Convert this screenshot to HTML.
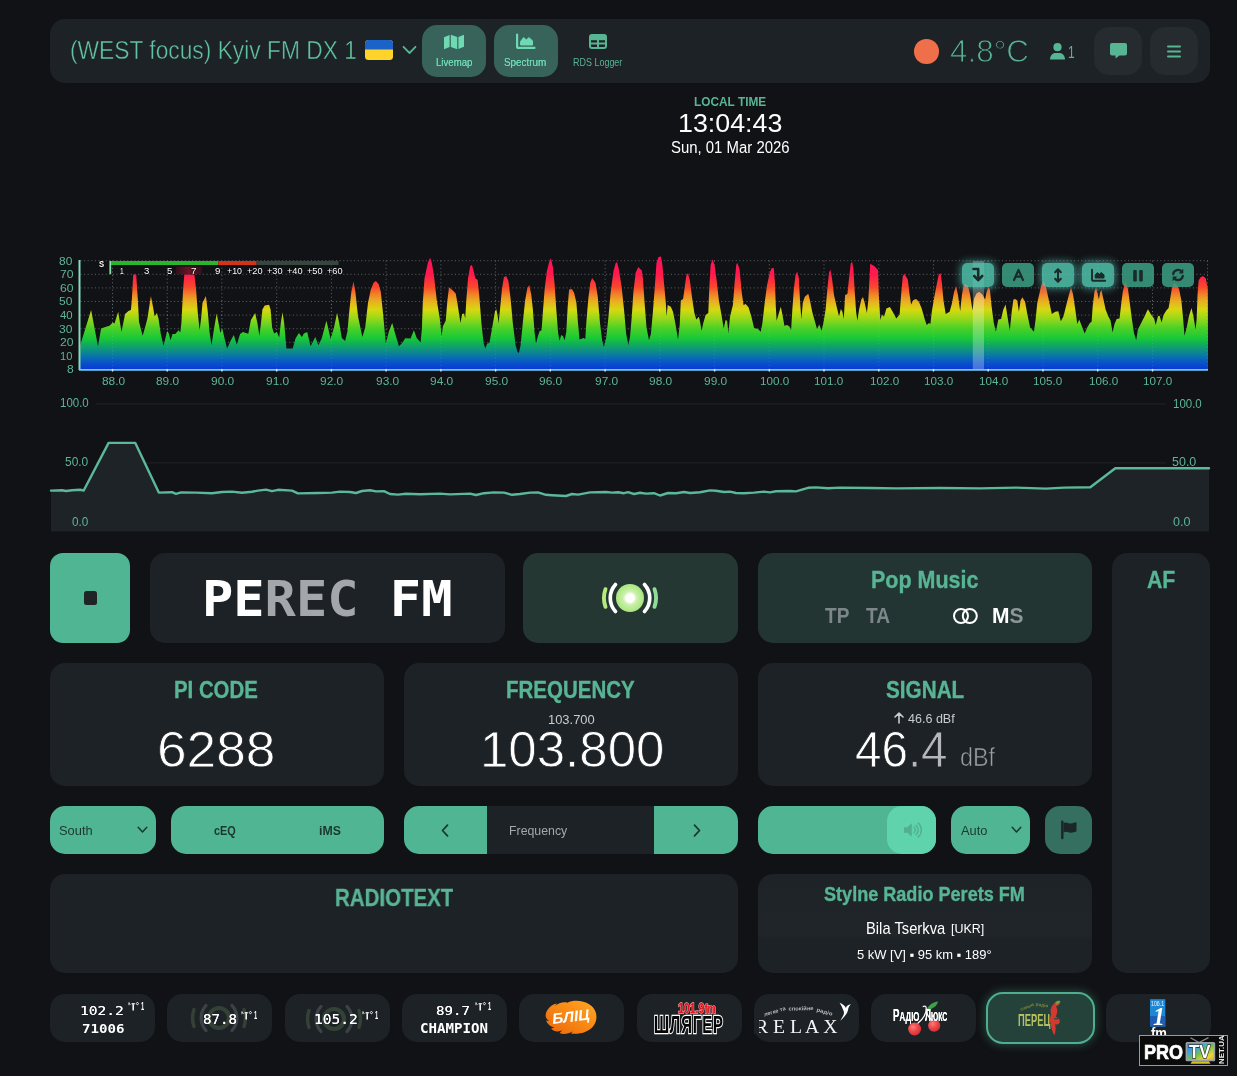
<!DOCTYPE html>
<html lang="en"><head><meta charset="utf-8"><title>FM-DX Webserver</title>
<style>
html,body{margin:0;padding:0;background:#111215;}
body{width:1237px;height:1076px;position:relative;overflow:hidden;font-family:"Liberation Sans",sans-serif;color:#fff;}
.b{position:absolute;box-sizing:border-box;}
.t{position:absolute;white-space:nowrap;line-height:1;transform-origin:0 0;display:block;}
svg{position:absolute;overflow:visible;}
#wrapper{position:absolute;left:0;top:0;width:1237px;height:1076px;will-change:transform;}

</style></head>
<body>
<div id="wrapper">
<div id="navigation">
<div class="b " style="left:50px;top:19px;width:1160px;height:64px;background:#1d2226;border-radius:15px;"></div>
<span class="t" style="left:69.96px;top:38.08px;font-size:25.32px;font-family:'Liberation Sans', sans-serif;font-weight:400;color:#62c3a0;transform:scaleX(0.8999);-webkit-text-stroke:0.45px #1d2226;">(WEST focus) Kyiv FM DX 1</span>
<svg style="left:365px;top:39.5px" width="28" height="20" viewBox="0 0 28 20"><rect width="28" height="20" rx="3.5" fill="#ffd42a"/><path d="M0 9.5V3.5A3.5 3.5 0 0 1 3.5 0h21A3.5 3.5 0 0 1 28 3.5v6z" fill="#1c63c9"/></svg>
<svg style="left:402px;top:45px" width="15" height="10" viewBox="0 0 15 10"><path d="M1.5 1.8 7.5 8 13.5 1.8" fill="none" stroke="#58b594" stroke-width="1.8" stroke-linecap="round" stroke-linejoin="round"/></svg>
<div class="b " style="left:422px;top:25px;width:64px;height:52px;background:#37635a;border-radius:15px;"></div>
<div class="b " style="left:494px;top:25px;width:64px;height:52px;background:#37635a;border-radius:15px;"></div>
<svg style="left:444px;top:34px" width="20" height="16" viewBox="0 0 20 16"><path d="M0 3.2 5.6 1v12L0 15.2zM6.8 0.8 13.2 3v12.2L6.8 13zM14.4 3 20 0.8v12L14.4 15z" fill="#6fd9b4"/></svg>
<span class="t" style="left:435.52px;top:56.73px;font-size:10.95px;font-family:'Liberation Sans', sans-serif;font-weight:400;color:#6fd9b4;transform:scaleX(0.8823);text-shadow:0 0 0.4px #6fd9b4;">Livemap</span>
<svg style="left:516px;top:34px" width="19" height="15" viewBox="0 0 19 15"><path d="M1.1 0.5v12.4a1 1 0 0 0 1 1H18.5" fill="none" stroke="#6fd9b4" stroke-width="2.2" stroke-linecap="round"/><path d="M4.6 11V7.4L7.6 3.6 10.4 6l2.4-2.4L16.5 6.8V11z" fill="#6fd9b4" stroke="#6fd9b4" stroke-width="1" stroke-linejoin="round"/></svg>
<span class="t" style="left:504.05px;top:56.73px;font-size:10.95px;font-family:'Liberation Sans', sans-serif;font-weight:400;color:#6fd9b4;transform:scaleX(0.9049);text-shadow:0 0 0.4px #6fd9b4;">Spectrum</span>
<svg style="left:589px;top:34px" width="18" height="15" viewBox="0 0 18 15"><rect x="1" y="1" width="16" height="13" rx="2" fill="none" stroke="#58b594" stroke-width="2"/><path d="M1 5.2H17M1 9.6H17M9 5.2V14" stroke="#58b594" stroke-width="2" fill="none"/><rect x="1" y="1" width="16" height="4" fill="#58b594"/></svg>
<span class="t" style="left:572.61px;top:56.73px;font-size:10.95px;font-family:'Liberation Sans', sans-serif;font-weight:400;color:#58b594;transform:scaleX(0.8198);">RDS Logger</span>
<div class="b" style="left:914px;top:39px;width:24.500px;height:24.500px;border-radius:50%;background:#ee6f4a"></div>
<span class="t" style="left:949.64px;top:36.24px;font-size:31.86px;font-family:'Liberation Sans', sans-serif;font-weight:400;color:#58b594;transform:scaleX(0.9880);-webkit-text-stroke:1.0px #1d2226;">4.8°C</span>
<svg style="left:1049.5px;top:43px" width="15" height="17" viewBox="0 0 15 17"><circle cx="7.5" cy="4.2" r="4.1" fill="#58b594"/><path d="M0 16.5c0-4 2.6-6.6 5.6-6.6h3.8c3 0 5.600 2.600 5.600 6.600z" fill="#58b594"/></svg>
<span class="t" style="left:1068.44px;top:43.66px;font-size:16.36px;font-family:'Liberation Sans', sans-serif;font-weight:400;color:#58b594;transform:scaleX(0.7361);">1</span>
<div class="b " style="left:1094px;top:27px;width:48px;height:48px;background:#252b2e;border-radius:15px;"></div>
<div class="b " style="left:1150px;top:27px;width:48px;height:48px;background:#252b2e;border-radius:15px;"></div>
<svg style="left:1110px;top:43px" width="17" height="16" viewBox="0 0 17 16"><path d="M2 0h13a2 2 0 0 1 2 2v8.500a2 2 0 0 1-2 2H9.500L5.500 15.600V12.500H2a2 2 0 0 1-2-2V2A2 2 0 0 1 2 0z" fill="#58b594"/></svg>
<svg style="left:1167px;top:45px" width="14" height="13" viewBox="0 0 14 13"><path d="M1 1.500H13M1 6.500H13M1 11.500H13" stroke="#58b594" stroke-width="2" stroke-linecap="round"/></svg>
</div>
<div id="clock">
<span class="t" style="left:693.74px;top:95.49px;font-size:13.37px;font-family:'Liberation Sans', sans-serif;font-weight:700;color:#58b594;transform:scaleX(0.8876);">LOCAL TIME</span>
<span class="t" style="left:678.46px;top:111.02px;font-size:25.03px;font-family:'Liberation Sans', sans-serif;font-weight:400;color:#fff;transform:scaleX(1.0720);">13:04:43</span>
<span class="t" style="left:670.76px;top:140.06px;font-size:15.64px;font-family:'Liberation Sans', sans-serif;font-weight:400;color:#fff;transform:scaleX(0.9545);">Sun, 01 Mar 2026</span>
</div>
<div id="spectrum-graph">
<svg style="left:0;top:0" width="1237" height="400" viewBox="0 0 1237 400"><defs><linearGradient id="sg" gradientUnits="userSpaceOnUse" x1="0" y1="260.7" x2="0" y2="369.5">
<stop offset="0" stop-color="#ff1458"/><stop offset="0.13" stop-color="#ff1a4c"/><stop offset="0.245" stop-color="#f84a2c"/><stop offset="0.315" stop-color="#f08628"/><stop offset="0.375" stop-color="#e8b020"/>
<stop offset="0.45" stop-color="#d6d810"/><stop offset="0.53" stop-color="#98d818"/><stop offset="0.625" stop-color="#48d028"/><stop offset="0.715" stop-color="#18c838"/>
<stop offset="0.775" stop-color="#10a860"/><stop offset="0.84" stop-color="#0c8890"/><stop offset="0.90" stop-color="#0868b8"/><stop offset="0.96" stop-color="#0848d0"/><stop offset="1" stop-color="#0a38d8"/>
</linearGradient><linearGradient id="pk" x1="0" x2="1" y1="0" y2="0"><stop offset="0" stop-color="#30101a"/><stop offset="0.5" stop-color="#6c1428"/><stop offset="1" stop-color="#30101a"/></linearGradient></defs><path d="M80.5 260.7H1208" stroke="#cfd6d8" stroke-opacity="0.42" stroke-width="1" stroke-dasharray="1 2.6" fill="none"/><path d="M80.5 274.3H1208" stroke="#cfd6d8" stroke-opacity="0.42" stroke-width="1" stroke-dasharray="1 2.6" fill="none"/><path d="M80.5 287.9H1208" stroke="#cfd6d8" stroke-opacity="0.42" stroke-width="1" stroke-dasharray="1 2.6" fill="none"/><path d="M80.5 301.5H1208" stroke="#cfd6d8" stroke-opacity="0.42" stroke-width="1" stroke-dasharray="1 2.6" fill="none"/><path d="M80.5 315.1H1208" stroke="#cfd6d8" stroke-opacity="0.42" stroke-width="1" stroke-dasharray="1 2.6" fill="none"/><path d="M80.5 328.7H1208" stroke="#cfd6d8" stroke-opacity="0.42" stroke-width="1" stroke-dasharray="1 2.6" fill="none"/><path d="M80.5 342.3H1208" stroke="#cfd6d8" stroke-opacity="0.42" stroke-width="1" stroke-dasharray="1 2.6" fill="none"/><path d="M80.5 355.9H1208" stroke="#cfd6d8" stroke-opacity="0.42" stroke-width="1" stroke-dasharray="1 2.6" fill="none"/><path d="M112.5 260.7V369.5" stroke="#cfd6d8" stroke-opacity="0.42" stroke-width="1" stroke-dasharray="1 2.6" fill="none"/><path d="M167.2 260.7V369.5" stroke="#cfd6d8" stroke-opacity="0.42" stroke-width="1" stroke-dasharray="1 2.6" fill="none"/><path d="M221.9 260.7V369.5" stroke="#cfd6d8" stroke-opacity="0.42" stroke-width="1" stroke-dasharray="1 2.6" fill="none"/><path d="M276.7 260.7V369.5" stroke="#cfd6d8" stroke-opacity="0.42" stroke-width="1" stroke-dasharray="1 2.6" fill="none"/><path d="M331.4 260.7V369.5" stroke="#cfd6d8" stroke-opacity="0.42" stroke-width="1" stroke-dasharray="1 2.6" fill="none"/><path d="M386.1 260.7V369.5" stroke="#cfd6d8" stroke-opacity="0.42" stroke-width="1" stroke-dasharray="1 2.6" fill="none"/><path d="M440.9 260.7V369.5" stroke="#cfd6d8" stroke-opacity="0.42" stroke-width="1" stroke-dasharray="1 2.6" fill="none"/><path d="M495.6 260.7V369.5" stroke="#cfd6d8" stroke-opacity="0.42" stroke-width="1" stroke-dasharray="1 2.6" fill="none"/><path d="M550.3 260.7V369.5" stroke="#cfd6d8" stroke-opacity="0.42" stroke-width="1" stroke-dasharray="1 2.6" fill="none"/><path d="M605.1 260.7V369.5" stroke="#cfd6d8" stroke-opacity="0.42" stroke-width="1" stroke-dasharray="1 2.6" fill="none"/><path d="M659.8 260.7V369.5" stroke="#cfd6d8" stroke-opacity="0.42" stroke-width="1" stroke-dasharray="1 2.6" fill="none"/><path d="M714.6 260.7V369.5" stroke="#cfd6d8" stroke-opacity="0.42" stroke-width="1" stroke-dasharray="1 2.6" fill="none"/><path d="M769.3 260.7V369.5" stroke="#cfd6d8" stroke-opacity="0.42" stroke-width="1" stroke-dasharray="1 2.6" fill="none"/><path d="M824.0 260.7V369.5" stroke="#cfd6d8" stroke-opacity="0.42" stroke-width="1" stroke-dasharray="1 2.6" fill="none"/><path d="M878.8 260.7V369.5" stroke="#cfd6d8" stroke-opacity="0.42" stroke-width="1" stroke-dasharray="1 2.6" fill="none"/><path d="M933.5 260.7V369.5" stroke="#cfd6d8" stroke-opacity="0.42" stroke-width="1" stroke-dasharray="1 2.6" fill="none"/><path d="M988.2 260.7V369.5" stroke="#cfd6d8" stroke-opacity="0.42" stroke-width="1" stroke-dasharray="1 2.6" fill="none"/><path d="M1043.0 260.7V369.5" stroke="#cfd6d8" stroke-opacity="0.42" stroke-width="1" stroke-dasharray="1 2.6" fill="none"/><path d="M1097.7 260.7V369.5" stroke="#cfd6d8" stroke-opacity="0.42" stroke-width="1" stroke-dasharray="1 2.6" fill="none"/><path d="M1152.5 260.7V369.5" stroke="#cfd6d8" stroke-opacity="0.42" stroke-width="1" stroke-dasharray="1 2.6" fill="none"/><path d="M1207.5 260.7V369.5" stroke="#cfd6d8" stroke-opacity="0.42" stroke-width="1" stroke-dasharray="1 2.6" fill="none"/><path d="M80 369.5L80.2 345.2L91.1 310.1L98 346.3L101.1 328.5L106.1 326.8L109.5 325.7L112.8 322.4L114.5 323.5L118.2 311.8L121.5 331.8L125.1 314L128.4 310.9L130.9 310.1L131.8 300.6L133.2 274.4L136.2 274.4L137.9 300.6L139 321.8L142.7 335.7L145.7 325.1L147.4 318.5L150.9 296.1L152.9 306.2L154.6 316.2L156.9 313.1L158.5 318.5L160.8 334.1L163.5 345.8L167.2 330.9L168.6 332.9L170.6 340.2L172.5 334.1L175.3 334.1L178.6 330.2L180.3 332.4L181.4 322.9L183.1 289.5L184.3 274.4L184.9 274.4L194.4 274.4L196.1 289.5L197.7 311.8L199.6 330.2L201.1 318.5L202.5 302.8L205.9 296.1L207.8 311.8L209.5 331.8L211.5 345.2L213.9 329.6L216.7 313.4L218.9 325.1L220.4 332.9L222.3 328.5L225.1 340.8L227.1 348.6L230.6 340.8L233.8 335L236.8 344.7L240.1 334.1L242.9 332.1L248.3 333.8L250.9 320.1L255.2 313.1L257.4 322.9L259.4 335.7L261 322.9L262.4 309.5L264.7 305.6L269.1 304.8L270.6 309.5L272.1 327.4L274.1 333.5L276.9 332.1L279.2 337.4L280.8 322.9L282.5 312.3L284.2 322.9L286.4 348.6L292.7 348.6L295.5 338.5L298.9 332.9L301.9 336.9L303.9 333.5L307.2 332.1L310.6 346.3L315.3 336.9L318.4 345.2L321.7 338.5L326.4 320.7L329 331.8L330.6 339.1L334 327.4L337.1 313.1L339 321.8L341.8 338L345.1 341L347.4 331.8L349 314L351.3 291.7L353.5 281.4L355.4 291.7L358 316.2L362.4 336.9L365.2 327.4L368 302.8L370.8 289.5L373.6 282.8L375.8 281.1L378.6 283.9L380.8 291.7L383.1 314L385.8 343.5L388.8 331.8L392.2 322.9L395 332.9L398.9 346.3L402.2 343L405.2 338.3L410.6 338.5L413.9 330.2L416.7 338L420.6 342.4L421.9 328.5L422.8 302.8L424.5 278.3L427.9 262.7L430.1 257.7L431.8 262.7L434 276.1L436.8 300.6L439.8 318.5L441.6 336.3L442.9 326.3L445.7 320.7L447.4 300.6L449 287.2L452.9 290.6L455.7 293.4L457.4 302.8L459.1 314L460.5 322.9L462.1 314L464.1 313.4L465.2 318.5L466.3 300.6L468 278.3L470.2 266L471.9 264.9L474.1 272.7L475.3 278.3L477.7 280L479.2 295L481.4 322.9L483.6 343L485.3 348.6L487.2 343.5L489.4 343L492.2 327.4L495 311.2L496.3 309.3L497.7 316.2L498.6 322.9L500 309.5L501.9 289.5L503.9 277.2L506.1 275.9L508.3 280.5L510.6 298.4L512.8 322.9L515.6 345.2L517.5 351.9L518.9 353L520.6 345.2L522.8 322.9L525.1 300.6L527.3 288.3L529.3 285L531.2 293.9L532.9 309.5L534.5 331.8L536 343.5L537.9 336.3L539.6 331.3L541.6 330.2L542.9 311.8L544.6 289.5L546.8 271.6L549 262.7L550.9 258L552.9 267.2L554.6 283.9L556.3 309.5L558 331.8L559.4 340.8L561.3 335L563 336.3L564.7 340.2L566.3 331.8L567.7 306.2L569.1 289.5L571.9 288.9L574.1 292.8L576.4 302.8L578 322.9L579.5 339.6L583.6 338L585.3 339.1L586.3 322.9L588.3 298.4L590.3 282.8L592.2 278.1L595.5 282.8L597.7 296.1L600 322.9L602.2 340.8L603.9 346.9L606.1 338.5L608.3 318.5L610.6 292.8L613.4 271.6L615.6 263.2L617 262.1L618.9 269.4L621.7 287.2L624 309.5L626.2 334.1L628.4 345.2L630.1 336.3L631.8 316.2L633.4 291.7L635.7 272.7L638.2 266.9L641.8 270.5L642.9 278.3L644.6 302.8L646.5 327.4L649 340.2L650.9 334.1L652.9 311.8L654.6 289.5L656.5 262.7L658.5 257.1L661 256.6L662.4 264.9L664.1 283.9L665.8 302.8L666.6 316.2L667.7 305.1L670.8 306.7L673 311.8L675.3 322.9L678 339.6L679.7 325.1L680.8 300.6L683.1 298.9L684.7 287.2L686.4 275L688 273.3L689.9 280.5L692.2 298.4L694.4 312.9L696.3 319.6L698.9 316.8L700.3 322.9L701.6 330.7L703.3 322.9L705.6 315.1L708.3 312.9L709.2 289.5L710.6 264.9L712.6 259.3L714.5 264.9L716.7 280.5L718.9 300.6L721.7 316.2L723.7 328.5L725.6 320.1L727.1 320.7L728.4 332.9L730.1 316.2L732.9 305.1L734.5 283.9L736.2 264.9L737.3 262.7L739.6 269.4L741.8 292.8L743.5 305.1L745.7 304L748.5 307.3L751.3 316.2L754.1 327.9L758 329L760.8 331.8L762.4 322.9L764.7 302.8L766.9 286.1L769.7 272.7L771.7 268L773.9 268.3L775 283.9L775.8 306.2L776.6 320.7L778.6 314L780.8 306.7L782.5 315.1L784.4 325.7L787.2 325.1L789.6 326.8L791.1 330.2L792.2 311.8L793.8 289.5L795.5 275L797.2 271.6L798.9 278.3L800 300.6L801.4 319.6L802.8 302.8L804.8 296.7L808.3 293.7L810 300.6L812.2 311.8L815 321.8L817 329L819.3 324.6L821.5 330.7L823.4 322.9L825.6 309.5L827.3 289.5L829 272.7L830.4 269.4L832 278.3L834 295L836.8 307.3L839 316.2L840.9 309L842.4 311.8L843.8 319L845.1 295L847.4 293.9L849 278.3L850.7 263.8L852.1 261.6L853.5 269.4L854.6 289.5L856.1 311.8L857.4 320.7L859.1 309.5L861.3 299.5L863 297L864.7 302.8L866.9 312.9L868.3 300.6L869.5 278.3L870.2 263.8L874.1 266L878 269.9L878.8 295L880.3 320.1L881.9 314.5L884 316.8L886.4 308.4L889.9 307.1L892.7 311.8L896.3 318.5L899.6 314.5L901.1 295L902.8 276.1L904.4 273.8L907.8 279.4L909.5 293.9L911.1 304.5L913.4 300.1L916.1 298.9L918.9 301.7L921.7 308.4L924.5 318.5L926.7 325.1L929 322.9L930.4 324L931.8 311.8L934 298.4L936.8 283.9L938.7 274.4L940.7 273.3L942 283.9L943.5 300.6L945.7 314L949.6 311.8L951.8 304L954.1 291.7L956.1 286.1L958 295L960.2 311.2L961.9 295L963.5 286.1L965.2 283.9L968 286.1L970.2 295L972.5 310.6L974.1 298.4L976.4 293.4L979.2 291.7L982.5 294.5L985.1 299.5L986.4 292.8L988.5 287.2L989.9 289.5L991.6 306.2L993.8 322.9L995.9 331.8L998.3 319.6L1001.1 319L1003.3 309.5L1005.6 304.5L1007.8 318.5L1009.8 330.7L1011.7 311.8L1013.4 299.5L1015.3 298.9L1017.3 300.6L1018.9 311.8L1020.6 300.6L1022.3 297.3L1025.1 301.7L1027.3 314L1030.1 327.4L1034 331.8L1035.7 318.5L1037.3 302.8L1039.6 292.8L1041.2 285L1044 281.6L1046.3 288.3L1048.5 298.4L1051.8 314L1055.2 311.8L1058.3 311.2L1060.8 321.2L1063.5 316.2L1066.3 305.1L1069.1 293.9L1071 287.8L1073 293.9L1075.3 309.5L1077.3 324L1079.2 319.6L1081.4 325.1L1084.7 333.5L1087.2 327.4L1089.9 322.9L1091.6 321.8L1092.7 306.2L1094.4 291.7L1096.1 287.8L1097.7 293.9L1098.9 299.5L1100 292.8L1101.4 290L1103.3 298.4L1105.6 309.5L1108.3 316.2L1110.6 320.7L1112.6 332.4L1114.5 324L1116.7 319L1119.5 318.5L1121.2 304L1122.8 291.7L1124.5 283.9L1125.6 281.1L1127.9 288.3L1129.5 300.6L1131.8 318.5L1134 332.9L1136.2 340.2L1137.9 329.6L1141.2 322.9L1144.6 316.2L1147.9 309.3L1150.7 314L1154.1 318.5L1155.7 325.1L1158 316.2L1159.6 315.7L1161.6 322.4L1163.5 315.1L1166.3 310.6L1168.6 307.9L1170.2 298.4L1171.9 288.3L1174.1 282.8L1176.9 285L1179.2 289.5L1181.4 300.6L1183.1 318.5L1184.5 335.7L1186.7 327.4L1188.9 316.2L1191.5 307.9L1193.4 316.2L1195.6 329.6L1196.7 318.5L1197.5 295L1198.6 280.5L1200.6 277.2L1202.9 276.1L1205.7 278.3L1207.1 285L1207.8 289.5L1208 369.5Z" fill="url(#sg)" stroke="none" stroke-linejoin="round"/><path d="M112.5 300V369.5" stroke="#bfe8ff" stroke-opacity="0.17" stroke-width="1" stroke-dasharray="1 2.6" fill="none"/><path d="M167.2 300V369.5" stroke="#bfe8ff" stroke-opacity="0.17" stroke-width="1" stroke-dasharray="1 2.6" fill="none"/><path d="M221.9 300V369.5" stroke="#bfe8ff" stroke-opacity="0.17" stroke-width="1" stroke-dasharray="1 2.6" fill="none"/><path d="M276.7 300V369.5" stroke="#bfe8ff" stroke-opacity="0.17" stroke-width="1" stroke-dasharray="1 2.6" fill="none"/><path d="M331.4 300V369.5" stroke="#bfe8ff" stroke-opacity="0.17" stroke-width="1" stroke-dasharray="1 2.6" fill="none"/><path d="M386.1 300V369.5" stroke="#bfe8ff" stroke-opacity="0.17" stroke-width="1" stroke-dasharray="1 2.6" fill="none"/><path d="M440.9 300V369.5" stroke="#bfe8ff" stroke-opacity="0.17" stroke-width="1" stroke-dasharray="1 2.6" fill="none"/><path d="M495.6 300V369.5" stroke="#bfe8ff" stroke-opacity="0.17" stroke-width="1" stroke-dasharray="1 2.6" fill="none"/><path d="M550.3 300V369.5" stroke="#bfe8ff" stroke-opacity="0.17" stroke-width="1" stroke-dasharray="1 2.6" fill="none"/><path d="M605.1 300V369.5" stroke="#bfe8ff" stroke-opacity="0.17" stroke-width="1" stroke-dasharray="1 2.6" fill="none"/><path d="M659.8 300V369.5" stroke="#bfe8ff" stroke-opacity="0.17" stroke-width="1" stroke-dasharray="1 2.6" fill="none"/><path d="M714.6 300V369.5" stroke="#bfe8ff" stroke-opacity="0.17" stroke-width="1" stroke-dasharray="1 2.6" fill="none"/><path d="M769.3 300V369.5" stroke="#bfe8ff" stroke-opacity="0.17" stroke-width="1" stroke-dasharray="1 2.6" fill="none"/><path d="M824.0 300V369.5" stroke="#bfe8ff" stroke-opacity="0.17" stroke-width="1" stroke-dasharray="1 2.6" fill="none"/><path d="M878.8 300V369.5" stroke="#bfe8ff" stroke-opacity="0.17" stroke-width="1" stroke-dasharray="1 2.6" fill="none"/><path d="M933.5 300V369.5" stroke="#bfe8ff" stroke-opacity="0.17" stroke-width="1" stroke-dasharray="1 2.6" fill="none"/><path d="M988.2 300V369.5" stroke="#bfe8ff" stroke-opacity="0.17" stroke-width="1" stroke-dasharray="1 2.6" fill="none"/><path d="M1043.0 300V369.5" stroke="#bfe8ff" stroke-opacity="0.17" stroke-width="1" stroke-dasharray="1 2.6" fill="none"/><path d="M1097.7 300V369.5" stroke="#bfe8ff" stroke-opacity="0.17" stroke-width="1" stroke-dasharray="1 2.6" fill="none"/><path d="M1152.5 300V369.5" stroke="#bfe8ff" stroke-opacity="0.17" stroke-width="1" stroke-dasharray="1 2.6" fill="none"/><path d="M1207.5 300V369.5" stroke="#bfe8ff" stroke-opacity="0.17" stroke-width="1" stroke-dasharray="1 2.6" fill="none"/><rect x="175.8" y="266.5" width="26.4" height="7.700" fill="url(#pk)"/><rect x="972.8" y="261" width="11.2" height="108" fill="#fff" fill-opacity="0.27"/><path d="M79.5 260V370" stroke="#86dcbc" stroke-width="2" fill="none"/><path d="M79 369.8H1208" stroke="#6ccaf8" stroke-width="1.8" fill="none"/><rect x="111.8" y="369.1" width="1.4" height="2.4" fill="#d8f0ff"/><rect x="166.5" y="369.1" width="1.4" height="2.4" fill="#d8f0ff"/><rect x="221.2" y="369.1" width="1.4" height="2.4" fill="#d8f0ff"/><rect x="276.0" y="369.1" width="1.4" height="2.4" fill="#d8f0ff"/><rect x="330.7" y="369.1" width="1.4" height="2.4" fill="#d8f0ff"/><rect x="385.4" y="369.1" width="1.4" height="2.4" fill="#d8f0ff"/><rect x="440.2" y="369.1" width="1.4" height="2.4" fill="#d8f0ff"/><rect x="494.9" y="369.1" width="1.4" height="2.4" fill="#d8f0ff"/><rect x="549.6" y="369.1" width="1.4" height="2.4" fill="#d8f0ff"/><rect x="604.4" y="369.1" width="1.4" height="2.4" fill="#d8f0ff"/><rect x="659.1" y="369.1" width="1.4" height="2.4" fill="#d8f0ff"/><rect x="713.9" y="369.1" width="1.4" height="2.4" fill="#d8f0ff"/><rect x="768.6" y="369.1" width="1.4" height="2.4" fill="#d8f0ff"/><rect x="823.3" y="369.1" width="1.4" height="2.4" fill="#d8f0ff"/><rect x="878.1" y="369.1" width="1.4" height="2.4" fill="#d8f0ff"/><rect x="932.8" y="369.1" width="1.4" height="2.4" fill="#d8f0ff"/><rect x="987.5" y="369.1" width="1.4" height="2.4" fill="#d8f0ff"/><rect x="1042.3" y="369.1" width="1.4" height="2.4" fill="#d8f0ff"/><rect x="1097.0" y="369.1" width="1.4" height="2.4" fill="#d8f0ff"/><rect x="1151.8" y="369.1" width="1.4" height="2.4" fill="#d8f0ff"/><rect x="109.4" y="261" width="1.8" height="13.2" fill="#86e0a8"/><rect x="111" y="261" width="107.2" height="4" fill="#2ab52c"/><rect x="218.2" y="261" width="38.4" height="4" fill="#d23418"/><rect x="256.6" y="261" width="82" height="4" fill="#36463e"/></svg>
<span class="t" style="left:98.88px;top:259.58px;font-size:8.53px;font-family:'Liberation Sans', sans-serif;font-weight:700;color:#fff;transform:scaleX(0.9042);text-shadow:0 0 2px #000;">S</span>
<span class="t" style="left:120.15px;top:267.10px;font-size:9.10px;font-family:'Liberation Sans', sans-serif;font-weight:400;color:#fff;transform:scaleX(0.7311);text-shadow:0 0 2px #000,0 0 1px #000;">1</span>
<span class="t" style="left:143.57px;top:267.10px;font-size:9.10px;font-family:'Liberation Sans', sans-serif;font-weight:400;color:#fff;transform:scaleX(1.0514);text-shadow:0 0 2px #000,0 0 1px #000;">3</span>
<span class="t" style="left:167.11px;top:267.10px;font-size:9.10px;font-family:'Liberation Sans', sans-serif;font-weight:400;color:#fff;transform:scaleX(1.0633);text-shadow:0 0 2px #000,0 0 1px #000;">5</span>
<span class="t" style="left:190.94px;top:267.10px;font-size:9.10px;font-family:'Liberation Sans', sans-serif;font-weight:400;color:#fff;transform:scaleX(1.0837);text-shadow:0 0 2px #000,0 0 1px #000;">7</span>
<span class="t" style="left:215.04px;top:267.10px;font-size:9.10px;font-family:'Liberation Sans', sans-serif;font-weight:400;color:#fff;transform:scaleX(1.0627);text-shadow:0 0 2px #000,0 0 1px #000;">9</span>
<span class="t" style="left:226.89px;top:267.10px;font-size:9.10px;font-family:'Liberation Sans', sans-serif;font-weight:400;color:#fff;transform:scaleX(0.9707);text-shadow:0 0 2px #000,0 0 1px #000;">+10</span>
<span class="t" style="left:247.08px;top:267.10px;font-size:9.10px;font-family:'Liberation Sans', sans-serif;font-weight:400;color:#fff;transform:scaleX(1.0114);text-shadow:0 0 2px #000,0 0 1px #000;">+20</span>
<span class="t" style="left:267.08px;top:267.10px;font-size:9.10px;font-family:'Liberation Sans', sans-serif;font-weight:400;color:#fff;transform:scaleX(1.0114);text-shadow:0 0 2px #000,0 0 1px #000;">+30</span>
<span class="t" style="left:287.48px;top:267.10px;font-size:9.10px;font-family:'Liberation Sans', sans-serif;font-weight:400;color:#fff;transform:scaleX(1.0114);text-shadow:0 0 2px #000,0 0 1px #000;">+40</span>
<span class="t" style="left:307.08px;top:267.10px;font-size:9.10px;font-family:'Liberation Sans', sans-serif;font-weight:400;color:#fff;transform:scaleX(1.0114);text-shadow:0 0 2px #000,0 0 1px #000;">+50</span>
<span class="t" style="left:327.48px;top:267.10px;font-size:9.10px;font-family:'Liberation Sans', sans-serif;font-weight:400;color:#fff;transform:scaleX(1.0114);text-shadow:0 0 2px #000,0 0 1px #000;">+60</span>
<span class="t" style="left:59.09px;top:255.97px;font-size:11.38px;font-family:'Liberation Sans', sans-serif;font-weight:400;color:#5cb696;transform:scaleX(1.0479);">80</span>
<span class="t" style="left:59.77px;top:268.57px;font-size:11.38px;font-family:'Liberation Sans', sans-serif;font-weight:400;color:#5cb696;transform:scaleX(1.0710);">70</span>
<span class="t" style="left:59.83px;top:283.17px;font-size:11.38px;font-family:'Liberation Sans', sans-serif;font-weight:400;color:#5cb696;transform:scaleX(1.0659);">60</span>
<span class="t" style="left:58.98px;top:295.77px;font-size:11.38px;font-family:'Liberation Sans', sans-serif;font-weight:400;color:#5cb696;transform:scaleX(1.0564);">50</span>
<span class="t" style="left:59.82px;top:310.37px;font-size:11.38px;font-family:'Liberation Sans', sans-serif;font-weight:400;color:#5cb696;transform:scaleX(0.9994);">40</span>
<span class="t" style="left:58.98px;top:323.97px;font-size:11.38px;font-family:'Liberation Sans', sans-serif;font-weight:400;color:#5cb696;transform:scaleX(1.0561);">30</span>
<span class="t" style="left:59.83px;top:336.57px;font-size:11.38px;font-family:'Liberation Sans', sans-serif;font-weight:400;color:#5cb696;transform:scaleX(1.0659);">20</span>
<span class="t" style="left:59.89px;top:351.17px;font-size:11.38px;font-family:'Liberation Sans', sans-serif;font-weight:400;color:#5cb696;transform:scaleX(0.9796);">10</span>
<span class="t" style="left:66.69px;top:363.77px;font-size:11.38px;font-family:'Liberation Sans', sans-serif;font-weight:400;color:#5cb696;transform:scaleX(1.0610);">8</span>
<span class="t" style="left:101.62px;top:376.39px;font-size:10.52px;font-family:'Liberation Sans', sans-serif;font-weight:400;color:#5cb696;transform:scaleX(1.1288);">88.0</span>
<span class="t" style="left:156.10px;top:376.39px;font-size:10.52px;font-family:'Liberation Sans', sans-serif;font-weight:400;color:#5cb696;transform:scaleX(1.1288);">89.0</span>
<span class="t" style="left:211.30px;top:376.39px;font-size:10.52px;font-family:'Liberation Sans', sans-serif;font-weight:400;color:#5cb696;transform:scaleX(1.1358);">90.0</span>
<span class="t" style="left:265.78px;top:376.39px;font-size:10.52px;font-family:'Liberation Sans', sans-serif;font-weight:400;color:#5cb696;transform:scaleX(1.1358);">91.0</span>
<span class="t" style="left:320.25px;top:376.39px;font-size:10.52px;font-family:'Liberation Sans', sans-serif;font-weight:400;color:#5cb696;transform:scaleX(1.1358);">92.0</span>
<span class="t" style="left:375.72px;top:376.39px;font-size:10.52px;font-family:'Liberation Sans', sans-serif;font-weight:400;color:#5cb696;transform:scaleX(1.1358);">93.0</span>
<span class="t" style="left:430.20px;top:376.39px;font-size:10.52px;font-family:'Liberation Sans', sans-serif;font-weight:400;color:#5cb696;transform:scaleX(1.1358);">94.0</span>
<span class="t" style="left:484.67px;top:376.39px;font-size:10.52px;font-family:'Liberation Sans', sans-serif;font-weight:400;color:#5cb696;transform:scaleX(1.1358);">95.0</span>
<span class="t" style="left:539.15px;top:376.39px;font-size:10.52px;font-family:'Liberation Sans', sans-serif;font-weight:400;color:#5cb696;transform:scaleX(1.1358);">96.0</span>
<span class="t" style="left:594.62px;top:376.39px;font-size:10.52px;font-family:'Liberation Sans', sans-serif;font-weight:400;color:#5cb696;transform:scaleX(1.1358);">97.0</span>
<span class="t" style="left:649.10px;top:376.39px;font-size:10.52px;font-family:'Liberation Sans', sans-serif;font-weight:400;color:#5cb696;transform:scaleX(1.1358);">98.0</span>
<span class="t" style="left:703.57px;top:376.39px;font-size:10.52px;font-family:'Liberation Sans', sans-serif;font-weight:400;color:#5cb696;transform:scaleX(1.1358);">99.0</span>
<span class="t" style="left:759.83px;top:376.39px;font-size:10.52px;font-family:'Liberation Sans', sans-serif;font-weight:400;color:#5cb696;transform:scaleX(1.1078);">100.0</span>
<span class="t" style="left:814.31px;top:376.39px;font-size:10.52px;font-family:'Liberation Sans', sans-serif;font-weight:400;color:#5cb696;transform:scaleX(1.1078);">101.0</span>
<span class="t" style="left:869.78px;top:376.39px;font-size:10.52px;font-family:'Liberation Sans', sans-serif;font-weight:400;color:#5cb696;transform:scaleX(1.1078);">102.0</span>
<span class="t" style="left:924.25px;top:376.39px;font-size:10.52px;font-family:'Liberation Sans', sans-serif;font-weight:400;color:#5cb696;transform:scaleX(1.1078);">103.0</span>
<span class="t" style="left:978.73px;top:376.39px;font-size:10.52px;font-family:'Liberation Sans', sans-serif;font-weight:400;color:#5cb696;transform:scaleX(1.1078);">104.0</span>
<span class="t" style="left:1033.20px;top:376.39px;font-size:10.52px;font-family:'Liberation Sans', sans-serif;font-weight:400;color:#5cb696;transform:scaleX(1.1078);">105.0</span>
<span class="t" style="left:1088.68px;top:376.39px;font-size:10.52px;font-family:'Liberation Sans', sans-serif;font-weight:400;color:#5cb696;transform:scaleX(1.1078);">106.0</span>
<span class="t" style="left:1143.15px;top:376.39px;font-size:10.52px;font-family:'Liberation Sans', sans-serif;font-weight:400;color:#5cb696;transform:scaleX(1.1078);">107.0</span>
<div class="b" style="left:962px;top:263px;width:32px;height:23.500px;border-radius:5px;background:rgba(84,206,180,0.80);box-shadow:0 0 9px 1px rgba(90,215,200,0.65);"><svg style="left:10px;top:4px" width="12" height="16" viewBox="0 0 12 16"><path d="M1.500 2H6.200V12.600M2.200 9 6.200 13.200 10.200 9" fill="none" stroke="#1b2b2b" stroke-width="2.600" stroke-linecap="round" stroke-linejoin="round"/></svg></div>
<div class="b" style="left:1002px;top:263px;width:32px;height:23.500px;border-radius:5px;background:rgba(58,158,130,0.86);"><svg style="left:10.500px;top:6px" width="11" height="12" viewBox="0 0 11 12"><path d="M1 11 5.500 1 10 11M2.800 7.600H8.200" fill="none" stroke="#1b2b2b" stroke-width="2.200" stroke-linecap="round" stroke-linejoin="round"/></svg></div>
<div class="b" style="left:1042px;top:263px;width:32px;height:23.500px;border-radius:5px;background:rgba(84,206,180,0.80);box-shadow:0 0 9px 1px rgba(90,215,200,0.65);"><svg style="left:12px;top:4.500px" width="8" height="15" viewBox="0 0 8 15"><path d="M4 1.500V13.500M1.200 4.200 4 1.300 6.800 4.200M1.200 10.800 4 13.700 6.800 10.800" fill="none" stroke="#1b2b2b" stroke-width="2.100" stroke-linecap="round" stroke-linejoin="round"/></svg></div>
<div class="b" style="left:1082px;top:263px;width:32px;height:23.500px;border-radius:5px;background:rgba(84,206,180,0.80);box-shadow:0 0 9px 1px rgba(90,215,200,0.65);"><svg style="left:8.500px;top:6px" width="15" height="13" viewBox="0 0 15 13"><path d="M1 0.800V10.800a1 1 0 0 0 1 1H14.200" fill="none" stroke="#1b2b2b" stroke-width="1.900" stroke-linecap="round"/><path d="M4.200 9V6L6.300 3.600 8.400 5.200 10.200 3.600 13 5.800V9z" fill="#1b2b2b" stroke="#1b2b2b" stroke-width="1" stroke-linejoin="round"/></svg></div>
<div class="b" style="left:1122px;top:263px;width:32px;height:23.500px;border-radius:5px;background:rgba(58,158,130,0.86);"><svg style="left:11px;top:6.500px" width="10" height="11" viewBox="0 0 10 11"><rect x="0.200" y="0" width="3.600" height="11.500" rx="1" fill="#1b2b2b"/><rect x="6.200" y="0" width="3.600" height="11.500" rx="1" fill="#1b2b2b"/></svg></div>
<div class="b" style="left:1162px;top:263px;width:32px;height:23.500px;border-radius:5px;background:rgba(58,158,130,0.86);"><svg style="left:10px;top:6px" width="12" height="12" viewBox="0 0 12 12"><path d="M1.200 5A4.900 4.900 0 0 1 9.800 2.700M10.800 7A4.900 4.900 0 0 1 2.200 9.300" fill="none" stroke="#1b2b2b" stroke-width="2.300" stroke-linecap="round"/><path d="M11.300 -0.300V4.400H6.600zM0.700 12.300V7.600H5.400z" fill="#1b2b2b"/></svg></div>
</div>
<div id="signal-canvas">
<svg style="left:0;top:395px" width="1237" height="140" viewBox="0 395 1237 140"><path d="M96 403.8H1166" stroke="#1b2023" stroke-width="1.2" fill="none"/><path d="M96 462.8H1166" stroke="#1b2023" stroke-width="1.2" fill="none"/><path d="M96 522.2H1166" stroke="#1b2023" stroke-width="1.2" fill="none"/><path d="M51 490.6L62 490.2L66 491L72 490.2L80 489.8L83.7 490.5L108.6 442.9L135.3 442.9L158.8 492.6L172 492.2L176 493.8L181 492.4L196 492.6L212 493.2L222 492L232 491.6L242 492.8L252 491.8L258 490.6L266 489.6L272 491.2L278 489.8L292 490.6L298 493.4L318 493L332 492.6L340 491.6L350 492L356 493L362 491L370 490.2L376 491.4L384 491.2L390 494L398 494.6L406 493.8L420 494.2L440 493.6L450 494.4L470 493.6L476 495L484 493.2L494 492.4L504 492.6L512 494.8L520 494L530 492.6L538 492.4L546 494.8L552 495.2L566 496L572 494L578 494.6L590 492.4L606 492L612 492.6L618 492.2L624 493.2L628 492.2L634 494L640 492.8L646 493.6L654 493.2L660 495.5L668 493L676 493.2L684 492L690 493L700 492.2L710 490.4L716 490.8L724 492L730 491.6L736 493L744 493.2L754 492.6L764 491.6L770 492.4L776 491.2L790 491L796 491.4L808 487.8L816 487.4L828 488.2L840 487.6L870 488L896 488.4L940 488L980 488.4L1016 487.6L1046 488.6L1064 487.6L1090.3 487.3L1115.3 468.3L1209 468.3L1209 531.5L51 531.5Z" fill="#1d2327"/><path d="M51 490.6L62 490.2L66 491L72 490.2L80 489.8L83.7 490.5L108.6 442.9L135.3 442.9L158.8 492.6L172 492.2L176 493.8L181 492.4L196 492.6L212 493.2L222 492L232 491.6L242 492.8L252 491.8L258 490.6L266 489.6L272 491.2L278 489.8L292 490.6L298 493.4L318 493L332 492.6L340 491.6L350 492L356 493L362 491L370 490.2L376 491.4L384 491.2L390 494L398 494.6L406 493.8L420 494.2L440 493.6L450 494.4L470 493.6L476 495L484 493.2L494 492.4L504 492.6L512 494.8L520 494L530 492.6L538 492.4L546 494.8L552 495.2L566 496L572 494L578 494.6L590 492.4L606 492L612 492.6L618 492.2L624 493.2L628 492.2L634 494L640 492.8L646 493.6L654 493.2L660 495.5L668 493L676 493.2L684 492L690 493L700 492.2L710 490.4L716 490.8L724 492L730 491.6L736 493L744 493.2L754 492.6L764 491.6L770 492.4L776 491.2L790 491L796 491.4L808 487.8L816 487.4L828 488.2L840 487.6L870 488L896 488.4L940 488L980 488.4L1016 487.6L1046 488.6L1064 487.6L1090.3 487.3L1115.3 468.3L1209 468.3" fill="none" stroke="#5bb898" stroke-width="2.400" stroke-linejoin="round" stroke-linecap="round"/></svg>
<span class="t" style="left:59.51px;top:396.67px;font-size:12.09px;font-family:'Liberation Sans', sans-serif;font-weight:400;color:#5cb696;transform:scaleX(0.9508);">100.0</span>
<span class="t" style="left:1172.71px;top:398.47px;font-size:12.09px;font-family:'Liberation Sans', sans-serif;font-weight:400;color:#5cb696;transform:scaleX(0.9508);">100.0</span>
<span class="t" style="left:64.97px;top:455.67px;font-size:12.09px;font-family:'Liberation Sans', sans-serif;font-weight:400;color:#5cb696;transform:scaleX(0.9889);">50.0</span>
<span class="t" style="left:1172.12px;top:455.97px;font-size:12.09px;font-family:'Liberation Sans', sans-serif;font-weight:400;color:#5cb696;transform:scaleX(1.0341);">50.0</span>
<span class="t" style="left:71.63px;top:515.87px;font-size:12.09px;font-family:'Liberation Sans', sans-serif;font-weight:400;color:#5cb696;transform:scaleX(0.9710);">0.0</span>
<span class="t" style="left:1172.80px;top:515.87px;font-size:12.09px;font-family:'Liberation Sans', sans-serif;font-weight:400;color:#5cb696;transform:scaleX(1.0374);">0.0</span>
</div>
<div id="tuner-row1">
<div class="b " style="left:50px;top:553px;width:80px;height:90px;background:#50b593;border-radius:13px;"><div class="b" style="left:33.5px;top:38px;width:13.5px;height:13.5px;border-radius:2.5px;background:#1f2427"></div></div>
<div class="b " style="left:150px;top:553px;width:355px;height:90px;background:#1d2226;border-radius:15px;"></div>
<span class="t" style="left:201.74px;top:574.61px;font-size:49.97px;font-family:'DejaVu Sans Mono', 'Liberation Mono', monospace;font-weight:700;color:#fff;transform:scaleX(1.0406);">PE<span style="color:#a3a7aa">REC</span> FM</span>
<div class="b " style="left:523px;top:553px;width:215px;height:90px;background:#243733;border-radius:15px;"></div>
<svg style="left:599px;top:568px" width="62" height="60" viewBox="-31 -30 62 60">
<defs><radialGradient id="rg"><stop offset="0" stop-color="#fff"/><stop offset="0.28" stop-color="#fff"/><stop offset="0.5" stop-color="#c9f0a8"/><stop offset="1" stop-color="#a9e67e"/></radialGradient></defs>
<circle r="14" fill="url(#rg)"/>
<path d="M-14.500 -13.500A20 20 0 0 0 -14.500 13.500" fill="none" stroke="#fff" stroke-width="3.700" stroke-linecap="round"/>
<path d="M14.500 -13.500A20 20 0 0 1 14.500 13.500" fill="none" stroke="#fff" stroke-width="3.700" stroke-linecap="round"/>
<path d="M-24.500 -8.800A26 26 0 0 0 -24.500 8.800" fill="none" stroke="#b4ec7c" stroke-width="3.900" stroke-linecap="round"/>
<path d="M24.500 -8.800A26 26 0 0 1 24.500 8.800" fill="none" stroke="#8fdc98" stroke-width="3.900" stroke-linecap="round"/>
</svg>
<div class="b " style="left:758px;top:553px;width:334px;height:90px;background:#223532;border-radius:15px;"></div>
<span class="t" style="left:870.67px;top:568.06px;font-size:24.04px;font-family:'Liberation Sans', sans-serif;font-weight:700;color:#58b594;transform:scaleX(0.8941);-webkit-text-stroke:0.350px #58b594;">Pop Music</span>
<span class="t" style="left:825.20px;top:604.60px;font-size:22.33px;font-family:'Liberation Sans', sans-serif;font-weight:700;color:#7d8789;transform:scaleX(0.8537);">TP</span>
<span class="t" style="left:865.80px;top:604.60px;font-size:22.33px;font-family:'Liberation Sans', sans-serif;font-weight:700;color:#7d8789;transform:scaleX(0.8569);">TA</span>
<svg style="left:952px;top:607px" width="27" height="18" viewBox="0 0 27 18"><circle cx="9" cy="9" r="7" fill="none" stroke="#fff" stroke-width="2"/><circle cx="17.8" cy="9" r="7" fill="none" stroke="#fff" stroke-width="2"/></svg>
<span class="t" style="left:992.29px;top:604.60px;font-size:22.33px;font-family:'Liberation Sans', sans-serif;font-weight:700;color:#fff;transform:scaleX(0.9391);">M<span style="color:#8d9698">S</span></span>
<div class="b " style="left:1112px;top:553px;width:98px;height:420px;background:#1d2226;border-radius:15px;"></div>
<span class="t" style="left:1147.23px;top:568.10px;font-size:23.75px;font-family:'Liberation Sans', sans-serif;font-weight:700;color:#58b594;transform:scaleX(0.8959);-webkit-text-stroke:0.350px #58b594;">AF</span>
</div>
<div id="tuner-row2">
<div class="b " style="left:50px;top:663px;width:334px;height:123px;background:#1d2226;border-radius:15px;"></div>
<span class="t" style="left:174.36px;top:679.38px;font-size:23.18px;font-family:'Liberation Sans', sans-serif;font-weight:700;color:#58b594;transform:scaleX(0.8788);-webkit-text-stroke:0.350px #58b594;">PI CODE</span>
<span class="t" style="left:157.45px;top:724.55px;font-size:50.63px;font-family:'Liberation Sans', sans-serif;font-weight:400;color:#fff;transform:scaleX(1.0503);-webkit-text-stroke:0.800px #1d2226;">6288</span>
<div class="b " style="left:404px;top:663px;width:334px;height:123px;background:#1d2226;border-radius:15px;"></div>
<span class="t" style="left:505.75px;top:679.38px;font-size:23.18px;font-family:'Liberation Sans', sans-serif;font-weight:700;color:#58b594;transform:scaleX(0.8847);-webkit-text-stroke:0.350px #58b594;">FREQUENCY</span>
<span class="t" style="left:547.54px;top:713.93px;font-size:12.37px;font-family:'Liberation Sans', sans-serif;font-weight:400;color:#c9cccd;transform:scaleX(1.0456);">103.700</span>
<span class="t" style="left:479.60px;top:724.55px;font-size:50.63px;font-family:'Liberation Sans', sans-serif;font-weight:400;color:#fff;transform:scaleX(1.0078);-webkit-text-stroke:0.800px #1d2226;">103.800</span>
<div class="b " style="left:758px;top:663px;width:334px;height:123px;background:#1d2226;border-radius:15px;"></div>
<span class="t" style="left:885.90px;top:679.38px;font-size:23.18px;font-family:'Liberation Sans', sans-serif;font-weight:700;color:#58b594;transform:scaleX(0.8939);-webkit-text-stroke:0.350px #58b594;">SIGNAL</span>
<svg style="left:894px;top:712px" width="10" height="12" viewBox="0 0 10 12"><path d="M5 11V1.500M1 5 5 1.200 9 5" fill="none" stroke="#c9cccd" stroke-width="1.600" stroke-linecap="round" stroke-linejoin="round"/></svg>
<span class="t" style="left:907.80px;top:712.97px;font-size:12.80px;font-family:'Liberation Sans', sans-serif;font-weight:400;color:#c9cccd;transform:scaleX(0.9797);">46.6 dBf</span>
<span class="t" style="left:855.26px;top:724.55px;font-size:50.63px;font-family:'Liberation Sans', sans-serif;font-weight:400;color:#fff;transform:scaleX(0.9390);-webkit-text-stroke:0.800px #1d2226;">46<span style="color:#b4b8ba">.4</span></span>
<span class="t" style="left:959.81px;top:745.34px;font-size:25.60px;font-family:'Liberation Sans', sans-serif;font-weight:400;color:#9a9fa1;transform:scaleX(0.9124);-webkit-text-stroke:0.6px #1d2226;">dBf</span>
</div>
<div id="tuner-row3">
<div class="b " style="left:50px;top:806px;width:106px;height:48px;background:#50b593;border-radius:15px;"></div>
<span class="t" style="left:58.80px;top:825.37px;font-size:12.80px;font-family:'Liberation Sans', sans-serif;font-weight:400;color:#1b3830;transform:scaleX(1.0048);">South</span>
<svg style="left:137px;top:825.500px" width="11" height="8" viewBox="0 0 11 8"><path d="M1.200 1.300 5.500 5.900 9.800 1.300" fill="none" stroke="#1b3830" stroke-width="1.500" stroke-linecap="round" stroke-linejoin="round"/></svg>
<div class="b " style="left:171px;top:806px;width:213px;height:48px;background:#50b593;border-radius:15px;"></div>
<span class="t" style="left:213.85px;top:825.31px;font-size:12.52px;font-family:'Liberation Sans', sans-serif;font-weight:700;color:#1b3830;transform:scaleX(0.8701);">cEQ</span>
<span class="t" style="left:319.06px;top:825.31px;font-size:12.52px;font-family:'Liberation Sans', sans-serif;font-weight:700;color:#1b3830;transform:scaleX(0.9821);">iMS</span>
<div class="b " style="left:404px;top:806px;width:334px;height:48px;background:#50b593;border-radius:15px;overflow:hidden;"><div class="b" style="left:83px;top:0;width:167px;height:48px;background:#1d2226"></div></div>
<svg style="left:441px;top:824px" width="8" height="13" viewBox="0 0 8 13"><path d="M6.500 1.200 1.500 6.500 6.500 11.800" fill="none" stroke="#1b3830" stroke-width="1.800" stroke-linecap="round" stroke-linejoin="round"/></svg>
<svg style="left:692.500px;top:824px" width="8" height="13" viewBox="0 0 8 13"><path d="M1.500 1.200 6.500 6.500 1.500 11.800" fill="none" stroke="#1b3830" stroke-width="1.800" stroke-linecap="round" stroke-linejoin="round"/></svg>
<span class="t" style="left:508.58px;top:825.27px;font-size:12.80px;font-family:'Liberation Sans', sans-serif;font-weight:400;color:#a3a8aa;transform:scaleX(0.9625);">Frequency</span>
<div class="b " style="left:758px;top:806px;width:178px;height:48px;background:#50b593;border-radius:15px;"><div class="b" style="left:129px;top:0;width:49px;height:48px;border-radius:15px;background:#5fd3ab"></div></div>
<svg style="left:903.500px;top:822px" width="19" height="16" viewBox="0 0 19 16"><path d="M0 5.300h3.300L7.800 1.300v13.400L3.300 10.700H0z" fill="#52b090"/><path d="M10 5.300a3.500 3.500 0 0 1 0 5.400M12 3.200a6.300 6.300 0 0 1 0 9.600M14.200 1a9.300 9.300 0 0 1 0 14" fill="none" stroke="#52b090" stroke-width="1.400" stroke-linecap="round"/></svg>
<div class="b " style="left:951px;top:806px;width:79px;height:48px;background:#50b593;border-radius:15px;"></div>
<span class="t" style="left:961.00px;top:825.15px;font-size:12.94px;font-family:'Liberation Sans', sans-serif;font-weight:400;color:#1b3830;transform:scaleX(0.9910);">Auto</span>
<svg style="left:1010.800px;top:825.500px" width="11" height="8" viewBox="0 0 11 8"><path d="M1.200 1.300 5.500 5.900 9.800 1.300" fill="none" stroke="#1b3830" stroke-width="1.500" stroke-linecap="round" stroke-linejoin="round"/></svg>
<div class="b " style="left:1045px;top:806px;width:47px;height:48px;background:#356f5f;border-radius:15px;"></div>
<svg style="left:1061px;top:821px" width="17" height="18" viewBox="0 0 17 18"><path d="M1.300 0.800V17" stroke="#1c2628" stroke-width="2.400" stroke-linecap="round"/><path d="M2.500 2c3-1.600 5 0.800 7.500 0.500 1.800-0.200 3.500-1 5.500-1.200v9.200c-2 0.300-3.500 1.200-5.500 1.300-2.500 0.200-4.500-2-7.500-0.300z" fill="#1c2628"/></svg>
</div>
<div id="tuner-row4">
<div class="b " style="left:50px;top:874px;width:688px;height:99px;background:#1d2226;border-radius:15px;"></div>
<span class="t" style="left:334.75px;top:886.68px;font-size:23.18px;font-family:'Liberation Sans', sans-serif;font-weight:700;color:#58b594;transform:scaleX(0.8840);-webkit-text-stroke:0.350px #58b594;">RADIOTEXT</span>
<div class="b " style="left:758px;top:874px;width:334px;height:99px;background:#1d2226;border-radius:15px;background-image:linear-gradient(180deg,rgba(255,255,255,0.004) 0,rgba(255,255,255,0.014) 62%,rgba(255,255,255,0) 66%);"></div>
<span class="t" style="left:824.48px;top:884.63px;font-size:19.34px;font-family:'Liberation Sans', sans-serif;font-weight:700;color:#58b594;transform:scaleX(0.9351);-webkit-text-stroke:0.350px #58b594;">Stylne Radio Perets FM</span>
<span class="t" style="left:866.11px;top:920.46px;font-size:16.36px;font-family:'Liberation Sans', sans-serif;font-weight:400;color:#fff;transform:scaleX(0.9015);">Bila Tserkva</span>
<span class="t" style="left:950.85px;top:922.59px;font-size:12.66px;font-family:'Liberation Sans', sans-serif;font-weight:400;color:#fff;transform:scaleX(0.9841);">[UKR]</span>
<span class="t" style="left:857.09px;top:949.29px;font-size:12.66px;font-family:'Liberation Sans', sans-serif;font-weight:400;color:#fff;transform:scaleX(1.0236);">5 kW [V] ▪ 95 km ▪ 189°</span>
</div>
<div id="preset-buttons">
<div class="b" style="left:50.0px;top:994.200px;width:105px;height:48.100px;border-radius:15px;background:#1d2226;overflow:hidden"></div>
<span class="t" style="left:79.81px;top:1003.84px;font-size:13.07px;font-family:'DejaVu Sans Mono', 'Liberation Mono', monospace;font-weight:400;color:#fff;transform:scaleX(1.1165);text-shadow:0 0 0.600px #fff;">102.2</span>
<svg style="left:127.8px;top:1001.8px" width="11" height="9" viewBox="0 0 11 9"><path d="M5.200 2.200V8.400" stroke="#fff" stroke-width="1.500" fill="none"/><path d="M3.600 1.800H6.800" stroke="#fff" stroke-width="1.300"/><path d="M1 0.300V3.200M1.200 1.400 2.400 2.600M9.400 0.500a1.100 1.100 0 1 0 0.010 0" stroke="#fff" stroke-width="0.900" fill="none"/></svg><span class="t" style="left:141.09px;top:1001.65px;font-size:10.10px;font-family:'Liberation Sans', sans-serif;font-weight:700;color:#fff;transform:scaleX(0.5652);">1</span>
<span class="t" style="left:81.51px;top:1022.04px;font-size:13.07px;font-family:'DejaVu Sans Mono', 'Liberation Mono', monospace;font-weight:700;color:#fff;transform:scaleX(1.0842);">71006</span>
<div class="b" style="left:167.3px;top:994.200px;width:105px;height:48.100px;border-radius:15px;background:#1d2226;overflow:hidden"></div>
<svg style="left:188.2px;top:988.3px;opacity:0.165" width="62" height="60" viewBox="-31 -30 62 60"><circle r="10" fill="none" stroke="#a8e080" stroke-width="4.200"/><path d="M-13 -12.500A18.500 18.500 0 0 0 -13 12.500M13 -12.500A18.500 18.500 0 0 1 13 12.500" fill="none" stroke="#dfe8e4" stroke-width="3.200" stroke-linecap="round"/><path d="M-25 -8.500A26.500 26.500 0 0 0 -25 8.500M25 -8.500A26.500 26.500 0 0 1 25 8.500" fill="none" stroke="#a8e080" stroke-width="3.400" stroke-linecap="round"/></svg>
<span class="t" style="left:202.69px;top:1012.82px;font-size:13.33px;font-family:'DejaVu Sans Mono', 'Liberation Mono', monospace;font-weight:400;color:#fff;transform:scaleX(1.0590);text-shadow:0 0 0.600px #fff;">87.8</span>
<svg style="left:241px;top:1010.7px" width="11" height="9" viewBox="0 0 11 9"><path d="M5.200 2.200V8.400" stroke="#fff" stroke-width="1.500" fill="none"/><path d="M3.600 1.800H6.800" stroke="#fff" stroke-width="1.300"/><path d="M1 0.300V3.200M1.200 1.400 2.400 2.600M9.400 0.500a1.100 1.100 0 1 0 0.010 0" stroke="#fff" stroke-width="0.900" fill="none"/></svg><span class="t" style="left:253.64px;top:1010.55px;font-size:10.10px;font-family:'Liberation Sans', sans-serif;font-weight:700;color:#fff;transform:scaleX(0.5652);">1</span>
<div class="b" style="left:284.6px;top:994.200px;width:105px;height:48.100px;border-radius:15px;background:#1d2226;overflow:hidden"></div>
<svg style="left:303.3px;top:988.6px;opacity:0.165" width="62" height="60" viewBox="-31 -30 62 60"><circle r="10" fill="none" stroke="#a8e080" stroke-width="4.200"/><path d="M-13 -12.500A18.500 18.500 0 0 0 -13 12.500M13 -12.500A18.500 18.500 0 0 1 13 12.500" fill="none" stroke="#dfe8e4" stroke-width="3.200" stroke-linecap="round"/><path d="M-25 -8.500A26.500 26.500 0 0 0 -25 8.500M25 -8.500A26.500 26.500 0 0 1 25 8.500" fill="none" stroke="#a8e080" stroke-width="3.400" stroke-linecap="round"/></svg>
<span class="t" style="left:314.43px;top:1012.82px;font-size:13.33px;font-family:'DejaVu Sans Mono', 'Liberation Mono', monospace;font-weight:400;color:#fff;transform:scaleX(1.0905);text-shadow:0 0 0.600px #fff;">105.2</span>
<svg style="left:361.8px;top:1010.7px" width="11" height="9" viewBox="0 0 11 9"><path d="M5.200 2.200V8.400" stroke="#fff" stroke-width="1.500" fill="none"/><path d="M3.600 1.800H6.800" stroke="#fff" stroke-width="1.300"/><path d="M1 0.300V3.200M1.200 1.400 2.400 2.600M9.400 0.500a1.100 1.100 0 1 0 0.010 0" stroke="#fff" stroke-width="0.900" fill="none"/></svg><span class="t" style="left:375.09px;top:1010.55px;font-size:10.10px;font-family:'Liberation Sans', sans-serif;font-weight:700;color:#fff;transform:scaleX(0.5652);">1</span>
<div class="b" style="left:401.9px;top:994.200px;width:105px;height:48.100px;border-radius:15px;background:#1d2226;overflow:hidden"></div>
<span class="t" style="left:436.32px;top:1003.84px;font-size:13.07px;font-family:'DejaVu Sans Mono', 'Liberation Mono', monospace;font-weight:400;color:#fff;transform:scaleX(1.0784);text-shadow:0 0 0.600px #fff;">89.7</span>
<svg style="left:475px;top:1001.8px" width="11" height="9" viewBox="0 0 11 9"><path d="M5.200 2.200V8.400" stroke="#fff" stroke-width="1.500" fill="none"/><path d="M3.600 1.800H6.800" stroke="#fff" stroke-width="1.300"/><path d="M1 0.300V3.200M1.200 1.400 2.400 2.600M9.400 0.500a1.100 1.100 0 1 0 0.010 0" stroke="#fff" stroke-width="0.900" fill="none"/></svg><span class="t" style="left:487.64px;top:1001.65px;font-size:10.10px;font-family:'Liberation Sans', sans-serif;font-weight:700;color:#fff;transform:scaleX(0.5652);">1</span>
<span class="t" style="left:419.83px;top:1021.71px;font-size:13.34px;font-family:'DejaVu Sans Mono', 'Liberation Mono', monospace;font-weight:700;color:#fff;transform:scaleX(1.0611);">CHAMPION</span>
<div class="b" style="left:519.2px;top:994.200px;width:105px;height:48.100px;border-radius:15px;background:#1d2226;overflow:hidden"></div>
<div class="b" style="left:636.5px;top:994.200px;width:105px;height:48.100px;border-radius:15px;background:#1d2226;overflow:hidden"></div>
<div class="b" style="left:753.8px;top:994.200px;width:105px;height:48.100px;border-radius:15px;background:#1d2226;overflow:hidden"></div>
<div class="b" style="left:871.1px;top:994.200px;width:105px;height:48.100px;border-radius:15px;background:#1d2226;overflow:hidden"></div>
<div class="b" style="left:986px;top:992px;width:109px;height:52px;border-radius:17px;background:#24413a;border:2px solid #4fae8f;box-shadow:0 0 10px 1px rgba(80,180,148,0.35);overflow:hidden"></div>
<div class="b" style="left:1105.7px;top:994.200px;width:105px;height:48.100px;border-radius:15px;background:#1d2226;overflow:hidden"></div>
<svg style="left:543px;top:999px" width="58" height="38" viewBox="0 0 58 38">
<defs><linearGradient id="bz" x1="0" y1="1" x2="1" y2="0"><stop offset="0" stop-color="#e8650c"/><stop offset="0.55" stop-color="#f98a14"/><stop offset="1" stop-color="#ffa726"/></linearGradient></defs>
<path d="M2.600 16.500C3.200 10.500 8.500 5.400 14 4.600l-2.400 2.600C16 3.800 20.500 2.600 24.500 3.800 30 0.800 40 1.200 46.500 5.500 54.500 10.500 55.500 21 50 27.500 45 33.500 36 35.800 28 34.500l2-2.200C25 35.200 20 35.600 16.500 34l2.600-2.400C14.500 33.200 10.500 32.200 8 29.800l3.400-1.600C7 27.800 4 24.500 3.200 21.500l3 0.600C3.800 20.500 2.600 18.500 2.600 16.500z" fill="url(#bz)"/></svg>
<span class="t" style="left:552.56px;top:1012.08px;font-size:14.79px;font-family:'Liberation Sans', sans-serif;font-weight:700;color:#fff;transform:scaleX(1.0588);font-style:italic;transform-origin:0 100%;rotate:-7deg;">БЛІЦ</span>
<span class="t" style="left:678.31px;top:1002.21px;font-size:13.94px;font-family:'Liberation Sans', sans-serif;font-weight:700;color:#e0141e;transform:scaleX(0.7568);-webkit-text-stroke:1.300px #f3a0a0;paint-order:stroke fill;">101.9<span style="font-size:0.9em">fm</span></span>
<span class="t" style="left:653.79px;top:1012.90px;font-size:24.46px;font-family:'Liberation Sans', sans-serif;font-weight:700;color:#050505;transform:scaleX(0.6096);-webkit-text-stroke:2.400px #fff;paint-order:stroke fill;letter-spacing:0.060em;">ШЛЯГЕР</span>
<span class="t" style="left:755.17px;top:1017.64px;font-size:18.13px;font-family:'Liberation Serif', serif;font-weight:400;color:#f4f4f4;transform:scaleX(1.0867);">R E L A X</span>
<div class="b" style="left:754px;top:1019px;width:5.400px;height:15px;background:#1d2226"></div>
<svg style="left:760px;top:1002px" width="95" height="22" viewBox="760 1002 95 22">
<g font-family="'Liberation Sans',sans-serif" font-size="5.400" font-weight="700" fill="#b9bbbb">
<text x="764.500" y="1016.400" transform="rotate(-17 764.500 1016.400)" textLength="22.500" lengthAdjust="spacingAndGlyphs">легке та</text>
<text x="788.600" y="1010.500" transform="rotate(-1 788.600 1010.500)" textLength="25" lengthAdjust="spacingAndGlyphs">спокійне</text>
<text x="816.200" y="1011.200" transform="rotate(16 816.200 1011.200)" textLength="16.500" lengthAdjust="spacingAndGlyphs">радіо</text></g>
<path d="M839.600 1002.800c3 1.200 5.200 2.800 6.300 5.200 0.600-2.300 2.300-3.400 5-3.800-1.600 1.600-2.600 3.400-2.800 5.400-0.300 2.600-1.700 4.400-3.300 6.300-1.300 1.700-2.800 3.200-4.600 4.800 1.300-2 2.500-3.900 3.300-5.700 0.800-1.800 0.600-3.300-0.300-4.900-0.900-2.600-2.100-4.900-3.600-7.300z" fill="#fff"/></svg>
<svg style="left:890px;top:998px" width="66" height="40" viewBox="890 998 66 40">
<defs><radialGradient id="ch" cx="0.38" cy="0.35" r="0.75"><stop offset="0" stop-color="#ff7a78"/><stop offset="0.45" stop-color="#ee4a4c"/><stop offset="1" stop-color="#c8282e"/></radialGradient></defs>
<path d="M926.200 1009.800C929 1004.500 933.500 1001.800 938 1001.400 937 1006 932.500 1009.600 926.200 1009.800z" fill="#3f9e4a"/>
<path d="M923.200 1006.600c1.800-1.200 3-0.300 3 1.600 0.300 5-2.800 10.500-8.600 15.300M926.200 1011c1 4.200 3.600 7.800 6.800 9.800" fill="none" stroke="#fff" stroke-width="1.250" stroke-linecap="round"/>
<circle cx="914.600" cy="1029" r="6.500" fill="url(#ch)"/><circle cx="934.200" cy="1025.600" r="6.100" fill="url(#ch)"/></svg>
<span class="t" style="left:892.99px;top:1006.88px;font-size:16.21px;font-family:'Liberation Sans', sans-serif;font-weight:700;color:#fff;transform:scaleX(0.5979);text-shadow:0 0 0.500px #fff;">Р<span style="font-size:0.82em">АДІО</span></span>
<span class="t" style="left:925.00px;top:1008.36px;font-size:15.64px;font-family:'Liberation Sans', sans-serif;font-weight:700;color:#fff;transform:scaleX(0.5434);text-shadow:0 0 0.500px #fff;">Л<span style="font-size:0.82em">ЮКС</span></span>
<span class="t" style="left:1018.43px;top:1012.26px;font-size:17.07px;font-family:'Liberation Sans', sans-serif;font-weight:700;color:#b5c15e;transform:scaleX(0.5482);">ПЕРЕЦ</span>
<svg style="left:1012px;top:998px" width="56" height="40" viewBox="1012 998 56 40"><g font-family="'Liberation Sans',sans-serif" font-size="4.600" font-weight="700" fill="#7d8a3c">
<text x="1021" y="1011" transform="rotate(-22 1021 1011)" textLength="14.500" lengthAdjust="spacingAndGlyphs">стильне</text>
<text x="1035.600" y="1005.600" transform="rotate(8 1035.600 1005.600)" textLength="12.500" lengthAdjust="spacingAndGlyphs">радіо</text></g>
<path d="M1053.200 1004.600c1.600-2.700 4.300-3.900 7.200-3.300-0.300 2.400-1.700 4.300-4.300 5.100 1.800 3.400 1.500 7-0.500 10.300 2.600 0.800 4.400 2.600 4.300 4.900-0.200 2.700-2.700 3.500-4.700 2.600 0.800 3.800 0.400 7.600-0.900 11-1.900-3.200-3.100-6.800-3.400-10.700-1.400-3.200-1.200-6.600 0.200-9.900-1.200-3.400-0.500-7 2.100-10z" fill="#d23a30"/>
<path d="M1055.200 1002.400c1.500-1.600 3.300-2.100 5.200-1.300-0.500 1.800-1.700 3-3.700 3.600z" fill="#7d9a3c"/>
<path d="M1054 1018.500c1.600 0.700 2.900 0.600 4.300-0.300" fill="none" stroke="#24413a" stroke-width="1.100"/></svg>
<svg style="left:1145px;top:997px" width="26" height="42" viewBox="1145 997 26 42">
<rect x="1150" y="999.200" width="15.300" height="27.300" fill="#1f88d6"/>
<rect x="1150" y="1016" width="15.300" height="10.500" fill="#1e5fb4"/></svg>
<span class="t" style="left:1151.01px;top:1000.46px;font-size:7.25px;font-family:'Liberation Sans', sans-serif;font-weight:400;color:#eaf4ff;transform:scaleX(0.7229);">106.1</span>
<span class="t" style="left:1153.05px;top:1003.84px;font-size:25.30px;font-family:'Liberation Serif', serif;font-weight:700;color:#fff;transform:scaleX(0.9388);font-style:italic;">1</span>
<span class="t" style="left:1150.78px;top:1026.40px;font-size:14.30px;font-family:'Liberation Sans', sans-serif;font-weight:700;color:#fff;transform:scaleX(0.9128);">fm</span>
<div id="watermark">
<div class="b" style="left:1139px;top:1034.500px;width:88.500px;height:31px;background:#0b0b0c;border:1px solid #9a9a9a"></div>
<span class="t" style="left:1143.74px;top:1041.93px;font-size:20.05px;font-family:'Liberation Sans', sans-serif;font-weight:700;color:#fff;transform:scaleX(0.8971);-webkit-text-stroke:0.700px #fff;">PRO</span>
<svg style="left:1184px;top:1037px" width="34" height="28" viewBox="1184 1037 34 28">
<defs><linearGradient id="tvg" x1="0" y1="0" x2="1" y2="1"><stop offset="0" stop-color="#2a7fd8"/><stop offset="0.33" stop-color="#3fa8d8"/><stop offset="0.55" stop-color="#7ac043"/><stop offset="0.8" stop-color="#e8d83a"/><stop offset="1" stop-color="#e8b02a"/></linearGradient></defs>
<path d="M1190.500 1037.800 1199 1042.600 1208.500 1037.600" fill="none" stroke="#8a8f92" stroke-width="1.200"/>
<rect x="1185.600" y="1042" width="29.600" height="19.200" rx="1.500" fill="#9aa0a4"/>
<rect x="1187.200" y="1043.500" width="26.400" height="16.200" fill="url(#tvg)"/>
<path d="M1192 1061.200h17l1.500 2.600h-20z" fill="#d8c020"/></svg>
<span class="t" style="left:1189.20px;top:1042.51px;font-size:18.77px;font-family:'Liberation Sans', sans-serif;font-weight:700;color:#fff;transform:scaleX(0.8959);-webkit-text-stroke:1.600px #3a3a3a;paint-order:stroke fill;">TV</span>
<span class="t" style="left:1217.600px;top:1064.200px;font-size:7.800px;font-weight:700;color:#e8e8e8;transform:rotate(-90deg);transform-origin:0 0;letter-spacing:0.100px">NET.UA</span>
</div>
</div>
</div>
</body></html>
